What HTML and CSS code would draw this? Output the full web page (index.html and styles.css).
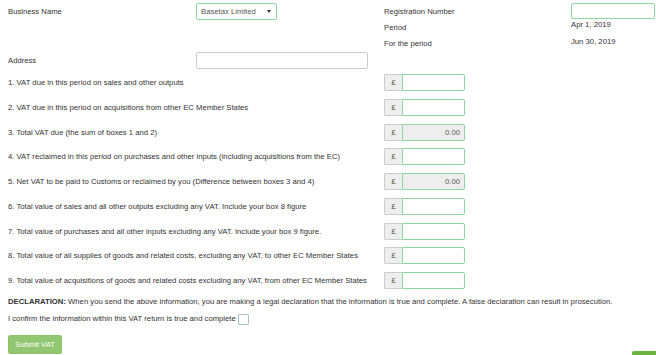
FILE: index.html
```html
<!DOCTYPE html>
<html>
<head>
<meta charset="utf-8">
<link rel="stylesheet" href="styles.css">
</head>
<body>
<div class="page">
  <div class="header">
    <div class="biz">
      <div class="lbl lbl-top">Business Name</div>
      <div class="select"><span>Basetax Limited</span><span class="caret"></span></div>
    </div>
    <div class="reg">
      <div class="reg-labels">
        <div class="rl rl1">Registration Number</div>
        <div class="rl">Period</div>
        <div class="rl">For the period</div>
      </div>
      <div class="reg-values">
        <input class="txt green reg-input" type="text">
        <div class="rv rv1">Apr 1, 2019</div>
        <div class="rv rv2">Jun 30, 2019</div>
      </div>
    </div>
  </div>
  <div class="address">
    <div class="lbl">Address</div>
    <input class="txt grey addr-input" type="text">
  </div>
  <div class="vat-list">
    <div class="vat-row"><div class="vat-lbl">1. VAT due in this period on sales and other outputs</div><div class="igroup"><span class="addon">£</span><input class="txt green money" type="text"></div></div>
    <div class="vat-row"><div class="vat-lbl">2. VAT due in this period on acquisitions from other EC Member States</div><div class="igroup"><span class="addon">£</span><input class="txt green money" type="text"></div></div>
    <div class="vat-row"><div class="vat-lbl">3. Total VAT due (the sum of boxes 1 and 2)</div><div class="igroup"><span class="addon">£</span><input class="txt green money ro" type="text" value="0.00" readonly></div></div>
    <div class="vat-row"><div class="vat-lbl">4. VAT reclaimed in this period on purchases and other inputs (including acquisitions from the EC)</div><div class="igroup"><span class="addon">£</span><input class="txt green money" type="text"></div></div>
    <div class="vat-row"><div class="vat-lbl">5. Net VAT to be paid to Customs or reclaimed by you (Difference between boxes 3 and 4)</div><div class="igroup"><span class="addon">£</span><input class="txt green money ro" type="text" value="0.00" readonly></div></div>
    <div class="vat-row"><div class="vat-lbl">6. Total value of sales and all other outputs excluding any VAT. Include your box 8 figure</div><div class="igroup"><span class="addon">£</span><input class="txt green money" type="text"></div></div>
    <div class="vat-row"><div class="vat-lbl">7. Total value of purchases and all other inputs excluding any VAT. Include your box 9 figure.</div><div class="igroup"><span class="addon">£</span><input class="txt green money" type="text"></div></div>
    <div class="vat-row"><div class="vat-lbl">8. Total value of all supplies of goods and related costs, excluding any VAT, to other EC Member States</div><div class="igroup"><span class="addon">£</span><input class="txt green money" type="text"></div></div>
    <div class="vat-row"><div class="vat-lbl">9. Total value of acquisitions of goods and related costs excluding any VAT, from other EC Member States</div><div class="igroup"><span class="addon">£</span><input class="txt green money" type="text"></div></div>
  </div>
  <div class="decl"><b>DECLARATION:</b> When you send the above information, you are making a legal declaration that the information is true and complete. A false declaration can result in prosecution.</div>
  <div class="confirm">I confirm the information within this VAT return is true and complete <span class="check"></span></div>
  <div class="actions">
    <button class="btn-submit" type="button">Submit VAT</button>
    <div class="btn-next"></div>
  </div>
</div>
</body>
</html>
```
FILE: styles.css
```css
html, body {
  margin: 0;
  padding: 0;
  background: #fff;
}
body {
  font-family: "Liberation Sans", Arial, sans-serif;
  font-size: 7.7px;
  color: #333;
  overflow: hidden;
}
.page {
  padding: 3px 0 0 8px;
}
.header {
  display: flex;
  height: 49px;
}
.biz {
  display: flex;
  width: 376px;
  align-items: flex-start;
}
.lbl {
  width: 188px;
  flex: none;
}
.lbl-top {
  line-height: 17px;
}
.select {
  box-sizing: border-box;
  width: 81px;
  height: 17px;
  border: 1px solid #8bd99f;
  border-radius: 2px;
  display: flex;
  align-items: center;
  justify-content: space-between;
  padding: 0 4px 0 4px;
  color: #555;
}
.caret {
  width: 0;
  height: 0;
  border-left: 2px solid transparent;
  border-right: 2px solid transparent;
  border-top: 3px solid #333;
  margin-right: 1px;
}
.reg {
  display: flex;
}
.reg-labels {
  width: 187px;
}
.rl {
  line-height: 16px;
}
.rl1 {
  line-height: 17px;
}
.reg-values {
  display: flex;
  flex-direction: column;
}
.rv {
  line-height: 11px;
}
.rv2 {
  margin-top: 6px;
}
.txt {
  box-sizing: border-box;
  margin: 0;
  font: inherit;
  color: #555;
  background: #fff;
  outline: none;
}
.green {
  border: 1px solid #8bd99f;
}
.grey {
  border: 1px solid #ccc;
}
.reg-input {
  width: 84px;
  height: 16px;
  border-radius: 2px;
}
.address {
  display: flex;
  align-items: center;
  height: 17px;
}
.addr-input {
  width: 172px;
  height: 17px;
  border-radius: 2px;
}
.vat-list {
  margin-top: 5px;
  display: flex;
  flex-direction: column;
  gap: 7.75px;
}
.vat-row {
  display: flex;
  align-items: center;
  height: 17px;
}
.vat-lbl {
  width: 376px;
  flex: none;
  white-space: nowrap;
}
.igroup {
  display: flex;
  height: 17px;
}
.addon {
  box-sizing: border-box;
  width: 18px;
  height: 17px;
  background: #eee;
  border: 1px solid #ccc;
  border-right: 0;
  border-radius: 2px 0 0 2px;
  display: flex;
  align-items: center;
  justify-content: center;
  color: #555;
  font-size: 8px;
}
.money {
  width: 63px;
  height: 17px;
  border-radius: 0 2px 2px 0;
  padding: 0 4px;
  text-align: right;
}
.ro {
  background: #eee;
}
.decl {
  margin-top: 8px;
  line-height: 10px;
  white-space: nowrap;
}
.decl b {
  color: #333;
}
.confirm {
  margin-top: 6px;
  line-height: 12px;
  display: flex;
  align-items: center;
  gap: 2px;
}
.check {
  box-sizing: border-box;
  display: inline-block;
  width: 11px;
  height: 11px;
  border: 1px solid #a9c2cc;
  border-radius: 1px;
  background: #fff;
}
.actions {
  margin-top: 10px;
  display: flex;
  align-items: flex-start;
}
.btn-submit {
  width: 54px;
  height: 19px;
  margin: 0;
  padding: 0;
  border: 1px solid #8cc46b;
  border-radius: 2px;
  background: #91c770;
  color: #fff;
  font: inherit;
}
.btn-next {
  margin-left: auto;
  margin-top: 16px;
  width: 24px;
  height: 10px;
  background: #6cb33f;
  border-radius: 2px 0 0 0;
}
```
